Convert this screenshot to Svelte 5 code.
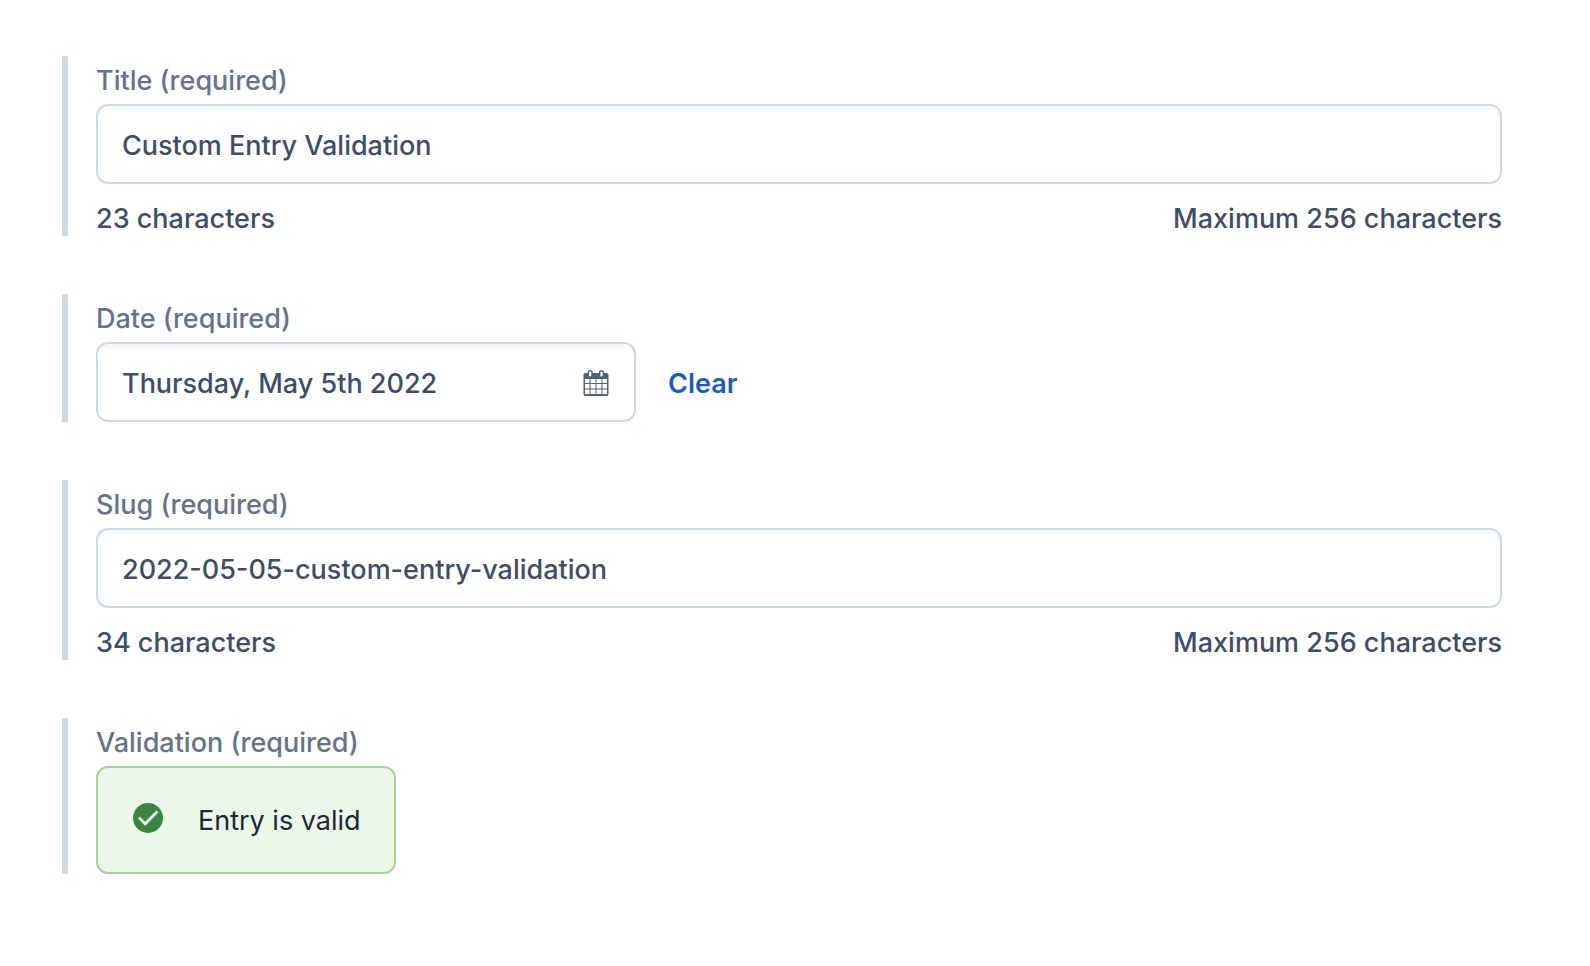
<script>
  let title = $state('Custom Entry Validation');
  let date = $state('Thursday, May 5th 2022');
  let slug = $state('2022-05-05-custom-entry-validation');
</script>

<form class="editor">
  <div class="field">
    <label for="title">Title (required)</label>
    <input id="title" type="text" maxlength="256" bind:value={title} />
    <div class="hint"><span>{title.length} characters</span><span>Maximum 256 characters</span></div>
  </div>

  <div class="field">
    <label for="date">Date (required)</label>
    <div class="date-row">
      <div class="date-box">
        <input id="date" type="text" bind:value={date} />
        <svg class="calendar" viewBox="0 0 26 26" aria-hidden="true">
          <rect x="0.5" y="3" width="25" height="23" rx="2" fill="#536171" />
          <path fill="#fff" d="M2 9H6.5V13H2ZM7.5 9H12.5V13H7.5ZM13.5 9H18.5V13H13.5ZM19.5 9H24V13H19.5ZM2 14H6.5V18.5H2ZM7.5 14H12.5V18.5H7.5ZM13.5 14H18.5V18.5H13.5ZM19.5 14H24V18.5H19.5ZM2 19.5H6.5V24H2ZM7.5 19.5H12.5V24H7.5ZM13.5 19.5H18.5V24H13.5ZM19.5 19.5H24V24H19.5Z" />
          <rect x="5.3" y="0.7" width="3.7" height="6.6" rx="1.8" fill="#fff" stroke="#536171" stroke-width="1.4" />
          <rect x="16.7" y="0.7" width="3.7" height="6.6" rx="1.8" fill="#fff" stroke="#536171" stroke-width="1.4" />
        </svg>
      </div>
      <button type="button" onclick={() => (date = '')}>Clear</button>
    </div>
  </div>

  <div class="field">
    <label for="slug">Slug (required)</label>
    <input id="slug" type="text" maxlength="256" bind:value={slug} />
    <div class="hint"><span>{slug.length} characters</span><span>Maximum 256 characters</span></div>
  </div>

  <div class="field">
    <div class="label">Validation (required)</div>
    <div class="note" role="status">
      <svg class="check" viewBox="0 0 30 30" aria-hidden="true">
        <circle cx="15" cy="15" r="15" fill="#3a8540" />
        <path d="M5.8 14.5L12.2 20.8L24.5 8.5" fill="none" stroke="#ecf7e7" stroke-width="2.8" />
      </svg>
      <span>Entry is valid</span>
    </div>
  </div>
</form>

<style>
  :global(body) { margin: 0; background: #fff; }
  .editor {
    display: flex;
    flex-direction: column;
    gap: 58px;
    padding: 56px 88px 56px 62px;
    font: 500 27px/36px Inter, sans-serif;
    color: #414d63;
  }
  .field { border-left: 6px solid #cfd9e0; padding-left: 28px; }
  label, .label { display: block; padding-top: 7px; margin-bottom: 5px; color: #67728a; }
  input {
    display: block;
    box-sizing: border-box;
    width: 100%;
    height: 80px;
    padding: 2px 24px 0;
    border: 2px solid #cfd9e0;
    border-radius: 12px;
    background: #fff;
    box-shadow: inset 0 4px 0 rgba(225, 232, 236, 0.25);
    font: inherit;
    color: inherit;
  }
  .hint { display: flex; justify-content: space-between; padding-top: 18px; line-height: 34px; }
  .date-row { display: flex; align-items: center; gap: 32px; }
  .date-box { position: relative; width: 540px; }
  .calendar { position: absolute; right: 27px; top: 28px; width: 26px; height: 26px; }
  button { padding: 4px 0 0; border: 0; background: none; font: inherit; font-weight: 600; color: #1d59c4; cursor: pointer; }
  .note {
    display: flex;
    align-items: center;
    gap: 35px;
    box-sizing: border-box;
    width: fit-content;
    height: 108px;
    padding: 2px 33px 0 35px;
    border: 2px solid #a9d398;
    border-radius: 12px;
    background: #ecf7e7;
    color: #1b273a;
    font-weight: 400;
  }
  .check { width: 30px; height: 30px; margin-bottom: 6px; }
</style>
